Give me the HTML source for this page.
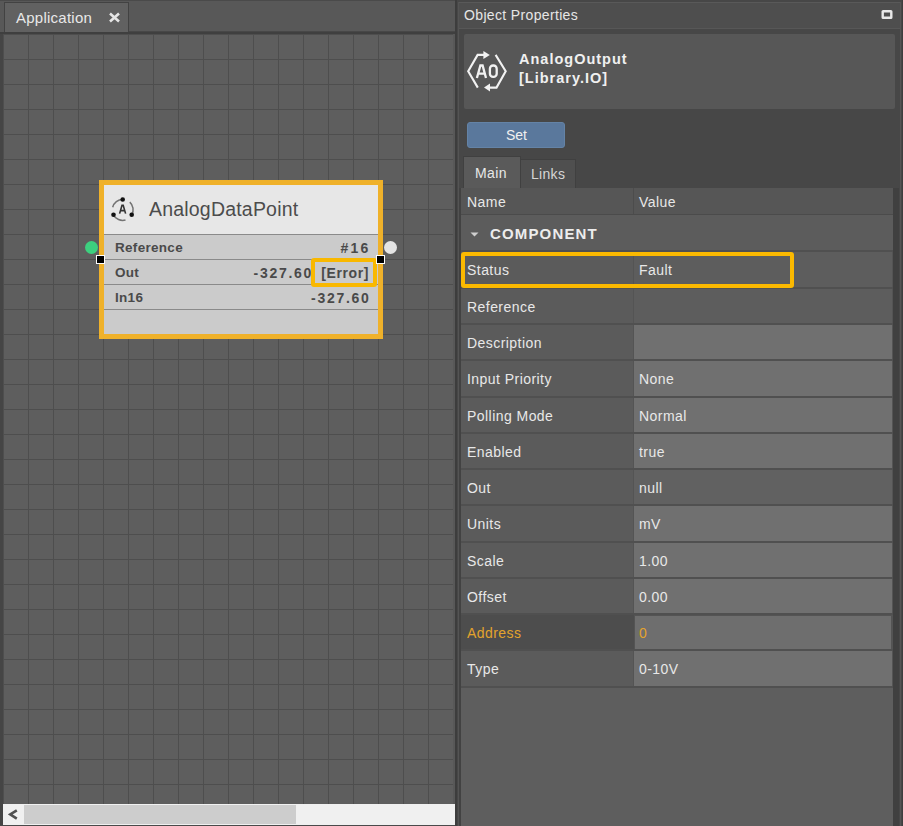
<!DOCTYPE html>
<html><head><meta charset="utf-8">
<style>
*{margin:0;padding:0;box-sizing:border-box}
html,body{width:903px;height:826px;overflow:hidden;background:#474747;font-family:"Liberation Sans",sans-serif}
.a{position:absolute}
#left{left:0;top:0;width:455px;height:826px;background:#585858;border-top:1px solid #4a4a4a}
#tab{left:4px;top:2px;width:125px;height:32px;background:#616161;border:1px solid #424242;border-bottom:none}
#tabtxt{left:16px;top:9.3px;font-size:15px;color:#e8e8e8;letter-spacing:0.25px;white-space:nowrap}
#tabx{left:108px;top:12px;width:13px;height:11px}
#tabline{left:0;top:32px;width:455px;height:2px;background:#3f3f3f}
#canvas{left:2px;top:34px;width:453px;height:792px;background-color:#5e5e5e;
 background-image:linear-gradient(to right,#4e4e4e 1px,transparent 1px),linear-gradient(to bottom,#4e4e4e 1px,transparent 1px);
 background-size:25px 25px;background-position:1px 0px}
#cborder{left:0;top:34px;width:3px;height:792px;background:#454545}
#cright{left:453px;top:34px;width:2px;height:792px;background:#585858}
#scroll{left:3px;top:804px;width:452px;height:21px;background:#f0f0f0}
#thumb{left:24px;top:805px;width:272px;height:19px;background:#cdcdcd}
#sbot{left:0;top:825px;width:455px;height:1px;background:#4a4a4a}

#node{left:99px;top:180px;width:284px;height:159px;background:#efb12a}
#nhead{left:104px;top:185px;width:274px;height:49px;background:#e7e7e7}
.nrow{position:absolute;left:104px;width:274px;height:25px;background:#cbcbcb;border-top:1px solid #8a8a8a}
.nl{position:absolute;left:11px;top:5px;font-size:13.5px;font-weight:bold;color:#4a4a4a;white-space:nowrap;letter-spacing:0.3px}
.nr{position:absolute;right:9px;top:5px;font-size:14px;font-weight:bold;color:#4a4a4a;letter-spacing:0.6px;white-space:nowrap}
#ntitle{left:149px;top:198px;font-size:19.5px;color:#4c4c4c;letter-spacing:0.2px;white-space:nowrap}
#errbox{left:311px;top:258px;width:66px;height:29px;border:4px solid #f9b800;border-radius:3px}
.hdl{position:absolute;width:9px;height:9px;background:#000;border:1px solid #fff}

#right{left:455px;top:0;width:448px;height:826px;background:#474747;border-left:2px solid #3d3d3d}
#rleft{left:458px;top:2px;width:1px;height:824px;background:#545454}
#rrl{left:900px;top:2px;width:1px;height:824px;background:#555}
#rrd{left:902px;top:0;width:1px;height:826px;background:#3e3e3e}
#rtitle{left:459px;top:2px;width:441px;height:27px;background:#4e4e4e;border-top:1px solid #595959;border-bottom:1px solid #575757}
#rtt{left:464px;top:7px;font-size:14px;color:#e6e6e6;letter-spacing:0.35px;white-space:nowrap}
#card{left:464px;top:34px;width:431px;height:75px;background:#575757;border-radius:2px}
#cname{left:519px;top:49.5px;font-size:14.5px;font-weight:bold;color:#f0f0f0;letter-spacing:1px;line-height:19.5px;white-space:nowrap}
#setbtn{left:467px;top:122px;width:98px;height:26px;background:#5a789c;border-radius:3px;border:1px solid #6483a6}
#settxt{left:506px;top:127px;font-size:14px;color:#f0f0f0}
#tmain{left:463px;top:156px;width:58px;height:32px;background:#5a5a5a;border:1px solid #404040;border-bottom:none}
#tlinks{left:520px;top:159px;width:56px;height:29px;background:#4f4f4f;border:1px solid #404040;border-bottom:none}
#tmt{left:475px;top:165px;font-size:14px;color:#e8e8e8;letter-spacing:0.4px}
#tlt{left:531px;top:166px;font-size:14px;color:#d6d6d6;letter-spacing:0.3px}
#tleft{left:459px;top:188px;width:2px;height:638px;background:#424242}
#table{left:461px;top:188px;width:432px;height:638px;background:#5e5e5e}
#tborder{left:893px;top:188px;width:6px;height:638px;background:#404040}
.tx{position:absolute;font-size:14px;color:#e8e8e8;letter-spacing:0.45px;white-space:nowrap}
.row{position:absolute;left:461px;width:432px;background:#545454;border-top:2px solid #505050}
.nc{position:absolute;left:0;top:0;width:172px;height:100%;background:#5b5b5b}
.vc{position:absolute;left:173px;top:0;width:258px;height:100%;background:#5d5d5d}
.vc.l{background:#707070}
.vc.o{background:#616161}
.vc.a{left:174px;top:1px;width:256px;height:calc(100% - 1px);background:#6e6e6e}
.nc.a2{background:#4d4d4d;width:173px}
.tx.or{color:#e3a32c}
#comp{left:490px;top:225px;font-size:15px;font-weight:bold;color:#ececec;letter-spacing:1.15px;white-space:nowrap}
#stbox{left:461px;top:252px;width:333px;height:36px;border:4px solid #fbb900;border-radius:3px}
</style></head>
<body>
<div id="left" class="a"></div>
<div id="tab" class="a"></div>
<div id="tabtxt" class="a">Application</div>
<svg id="tabx" class="a" viewBox="0 0 13 11"><path d="M2 1.5 L11 9.5 M11 1.5 L2 9.5" stroke="#e6e6e6" stroke-width="2.6" fill="none"/></svg>
<div id="tabline" class="a"></div><div class="a" style="left:129px;top:31px;width:326px;height:1px;background:#474747"></div>
<div id="canvas" class="a"></div>
<div id="cborder" class="a"></div>
<div id="cright" class="a"></div>
<div id="scroll" class="a"></div>
<div id="thumb" class="a"></div>
<div id="sbot" class="a"></div>
<svg class="a" style="left:8px;top:806px" width="12" height="16" viewBox="0 0 12 16"><path d="M8.8 4.3 L2.2 8.4 L8.8 12.6" stroke="#505050" stroke-width="2.6" fill="none"/></svg>

<div id="node" class="a"></div>
<div id="nhead" class="a"></div>
<svg class="a" style="left:108px;top:193px" width="30" height="30" viewBox="0 0 30 30">
<g stroke="#737373" stroke-width="1.5" fill="none">
<path d="M14.6 6.45 A10.4 10.4 0 0 0 4.7 14.2"/>
<path d="M5.4 21.8 A10.4 10.4 0 0 0 17.5 27"/>
<path d="M21.8 9.1 A10.4 10.4 0 0 1 23.8 21.8"/>
</g>
<circle cx="14.7" cy="6.5" r="2.3" fill="#111"/>
<circle cx="5.5" cy="21.7" r="2.3" fill="#111"/>
<circle cx="23.7" cy="21.7" r="2.3" fill="#111"/>
<path d="M11.6 20.6 L14 12.3 L15.2 12.3 L17.6 20.6 M12.6 17.6 L16.6 17.6" stroke="#333" stroke-width="1.6" fill="none"/>
</svg>
<div id="ntitle" class="a">AnalogDataPoint</div>
<div class="nrow" style="top:234px"><span class="nl">Reference</span><span class="nr" style="letter-spacing:2.2px;right:7.5px">#16</span></div>
<div class="nrow" style="top:259px"><span class="nl">Out</span><span class="nr" style="right:65px;letter-spacing:1.7px">-327.60</span><span class="nr">[Error]</span></div>
<div class="nrow" style="top:284px"><span class="nl">In16</span><span class="nr" style="right:7.5px;letter-spacing:1.7px">-327.60</span></div>
<div class="nrow" style="top:309px;height:25px"></div>
<div id="errbox" class="a"></div>
<div class="a" style="left:85px;top:241px;width:13px;height:13px;border-radius:50%;background:#3dd07f"></div>
<div class="a" style="left:384px;top:241px;width:13px;height:13px;border-radius:50%;background:#e4e4e4"></div>
<div class="hdl" style="left:96px;top:255px"></div>
<div class="hdl" style="left:376px;top:255px"></div>

<div id="right" class="a"></div>
<div id="rleft" class="a"></div>
<div id="rrl" class="a"></div>
<div id="rrd" class="a"></div>
<div id="rtitle" class="a"></div>
<div id="rtt" class="a">Object Properties</div>
<svg class="a" style="left:881px;top:10px" width="12" height="9" viewBox="0 0 12 9"><rect x="1.7" y="1.2" width="8.6" height="6.6" stroke="#e8e8e8" stroke-width="2.4" fill="none" rx="0.4"/></svg>
<div id="card" class="a"></div>
<svg class="a" style="left:460px;top:40px" width="50" height="56" viewBox="0 0 50 56">
<g stroke="#f2f2f2" stroke-width="2.1" fill="none">
<path d="M17.8 47.6 L8.2 31.2 L17.6 14.9 L25 14.9"/>
<path d="M35.6 14.9 L45.7 31.2 L36.5 47.6 L29 47.6"/>
<path d="M16.9 38 L20.4 25.5 L22.6 25.5 L26 38 M18.4 33.6 L24.6 33.6" stroke-width="2.3"/>
</g>
<path d="M23.4 11 L29.8 15 L23.4 19 Z" fill="#f2f2f2"/>
<path d="M30 43.6 L24 47.6 L30 51.6 Z" fill="#f2f2f2"/>
<rect x="29.9" y="25.5" width="6.8" height="11.4" rx="3.2" stroke="#f2f2f2" stroke-width="2.3" fill="none"/>
</svg>
<div id="cname" class="a">AnalogOutput<br>[Library.IO]</div>
<div id="setbtn" class="a"></div>
<div id="settxt" class="a">Set</div>
<div id="tmain" class="a"></div>
<div id="tlinks" class="a"></div>
<div id="tmt" class="a">Main</div>
<div id="tlt" class="a">Links</div>
<div id="tleft" class="a"></div>
<div id="table" class="a"></div>
<div id="tborder" class="a"></div>
<div class="a" style="left:461px;top:188px;width:432px;height:27px;background:#565656"></div>
<div class="a" style="left:633px;top:188px;width:1px;height:26px;background:#4c4c4c"></div>
<div class="a" style="left:461px;top:214px;width:432px;height:1px;background:#4b4b4b"></div>
<span class="tx a" style="left:467px;top:194px">Name</span>
<span class="tx a" style="left:639px;top:194px">Value</span>
<div class="a" style="left:461px;top:215px;width:432px;height:35px;background:#5c5c5c"></div>
<svg class="a" style="left:469px;top:231px" width="11" height="7" viewBox="0 0 11 7"><path d="M1.5 1.5 L9.5 1.5 L5.5 5.5 Z" fill="#cfcfcf"/></svg>
<div id="comp" class="a">COMPONENT</div>
<div class="row" style="top:250px;height:37px"><div class="nc"></div><div class="vc"></div><span class="tx" style="left:6px;top:10px">Status</span><span class="tx" style="left:178px;top:10px">Fault</span></div>
<div class="row" style="top:287px;height:36px"><div class="nc"></div><div class="vc"></div><span class="tx" style="left:6px;top:10px">Reference</span><span class="tx" style="left:178px;top:10px"></span></div>
<div class="row" style="top:323px;height:36px"><div class="nc"></div><div class="vc l"></div><span class="tx" style="left:6px;top:10px">Description</span><span class="tx" style="left:178px;top:10px"></span></div>
<div class="row" style="top:359px;height:37px"><div class="nc"></div><div class="vc l"></div><span class="tx" style="left:6px;top:10px">Input Priority</span><span class="tx" style="left:178px;top:10px">None</span></div>
<div class="row" style="top:396px;height:36px"><div class="nc"></div><div class="vc l"></div><span class="tx" style="left:6px;top:10px">Polling Mode</span><span class="tx" style="left:178px;top:10px">Normal</span></div>
<div class="row" style="top:432px;height:36px"><div class="nc"></div><div class="vc l"></div><span class="tx" style="left:6px;top:10px">Enabled</span><span class="tx" style="left:178px;top:10px">true</span></div>
<div class="row" style="top:468px;height:36px"><div class="nc"></div><div class="vc o"></div><span class="tx" style="left:6px;top:10px">Out</span><span class="tx" style="left:178px;top:10px">null</span></div>
<div class="row" style="top:504px;height:37px"><div class="nc"></div><div class="vc l"></div><span class="tx" style="left:6px;top:10px">Units</span><span class="tx" style="left:178px;top:10px">mV</span></div>
<div class="row" style="top:541px;height:36px"><div class="nc"></div><div class="vc l"></div><span class="tx" style="left:6px;top:10px">Scale</span><span class="tx" style="left:178px;top:10px">1.00</span></div>
<div class="row" style="top:577px;height:36px"><div class="nc"></div><div class="vc l"></div><span class="tx" style="left:6px;top:10px">Offset</span><span class="tx" style="left:178px;top:10px">0.00</span></div>
<div class="row" style="top:613px;height:36px"><div class="nc a2"></div><div class="vc a"></div><span class="tx or" style="left:6px;top:10px">Address</span><span class="tx or" style="left:178px;top:10px">0</span></div>
<div class="row" style="top:649px;height:37px"><div class="nc"></div><div class="vc l"></div><span class="tx" style="left:6px;top:10px">Type</span><span class="tx" style="left:178px;top:10px">0-10V</span></div>
<div class="a" style="left:461px;top:686px;width:432px;height:2px;background:#505050"></div>
<div id="stbox" class="a"></div>
</body></html>
